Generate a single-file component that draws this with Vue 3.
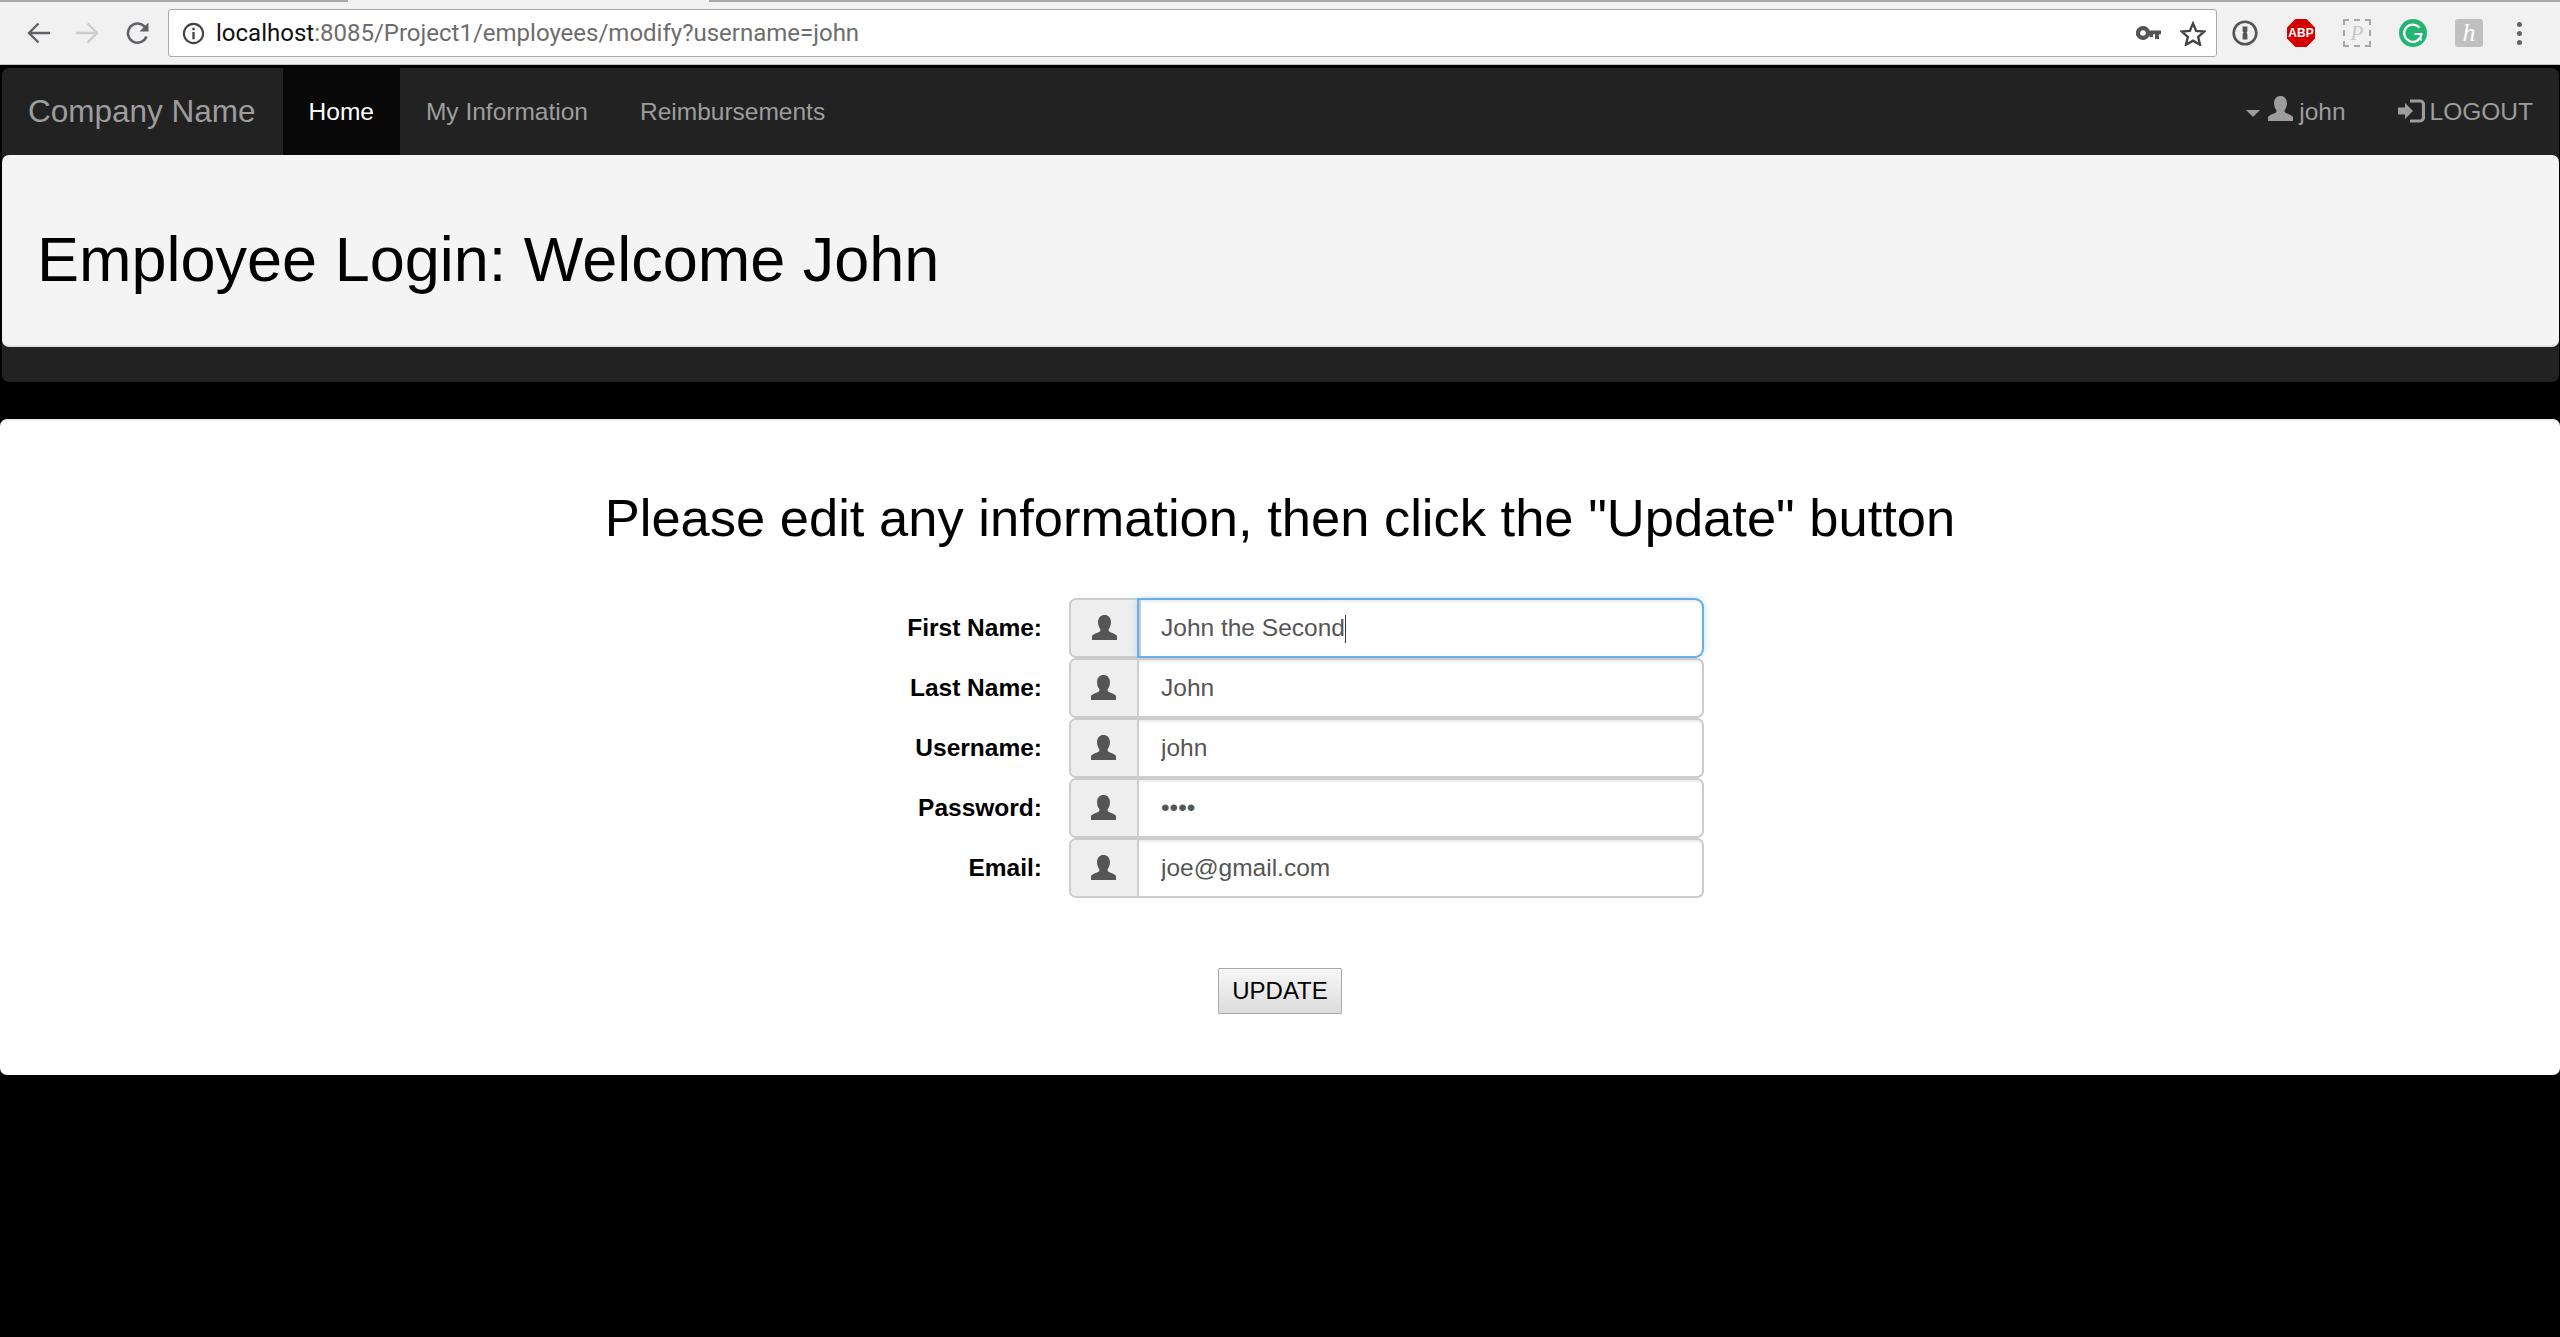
<template>
  <div class="page">
    <div class="tabstrip">
      <span class="tab-line first"></span>
      <span class="tab-line last"></span>
    </div>
    <div class="chrome">
      <svg class="tool" viewBox="0 0 23 22" fill="none" stroke="#5f6368" stroke-width="2.4">
        <path d="M23 11H3M11.5 1.5 2 11l9.5 9.5" />
      </svg>
      <svg class="tool forward" viewBox="0 0 23 22" fill="none" stroke="#cdcdcd" stroke-width="2.4">
        <path d="M0 11h20M11.5 1.5 21 11l-9.5 9.5" />
      </svg>
      <svg class="tool reload" viewBox="0 0 24 24" fill="none" stroke="#5f6368" stroke-width="2.6">
        <path d="M20.5 15.5a9.6 9.6 0 1 1-1.6-9.6" />
        <path d="M22.5 1.5v9h-9z" fill="#5f6368" stroke="none" />
      </svg>
      <div class="address">
        <svg class="info" viewBox="0 0 24 24" fill="none" stroke="#444" stroke-width="2.2">
          <circle cx="12" cy="12" r="10" />
          <path d="M12 10.5V18M12 6v2.6" stroke-width="2.4" />
        </svg>
        <span class="url"><span class="host">localhost</span>:8085/Project1/employees/modify?username=john</span>
        <svg class="key" viewBox="0 0 25 14" fill="#555">
          <path d="M7 0a7 7 0 0 1 6.6 4.6H25v3.6h-2V13h-4V8.2h-2V11h-3.5V9.2A7 7 0 1 1 7 0zm0 4.2a2.8 2.8 0 1 0 0 5.6 2.8 2.8 0 0 0 0-5.6z" />
        </svg>
        <svg class="star" viewBox="0 0 26 25" fill="none" stroke="#444" stroke-width="2.4">
          <path d="m13 2.5 3.2 7.4 8 .7-6 5.3 1.8 7.8L13 19.6l-7 4.1 1.8-7.8-6-5.3 8-.7z" />
        </svg>
      </div>
      <div class="ext">
        <svg class="ext-icon" viewBox="0 0 26 26" fill="none">
          <circle cx="13" cy="13" r="11.3" stroke="#555" stroke-width="2.6" />
          <path d="M10.6 6.5h4.8v5l-1 1.2 1 1.2v5.6h-4.8v-5.600l1-1.200-1-1.200z" fill="#555" />
        </svg>
      </div>
      <div class="ext"><span class="abp">ABP</span></div>
      <div class="ext"><span class="pocket">P</span></div>
      <div class="ext">
        <svg class="ext-icon grammarly" viewBox="0 0 28 28" fill="none">
          <circle cx="14" cy="14" r="14" fill="#22b573" />
          <path d="M20.5 8.8A8.6 8.6 0 1 0 22.4 15h-7" stroke="#fff" stroke-width="2.2" />
          <path d="m22 17 1 5-4.500-1.500z" fill="#fff" />
        </svg>
      </div>
      <div class="ext"><span class="honey">h</span></div>
      <div class="ext menu-dots"><i></i><i></i><i></i></div>
    </div>

    <div class="navbar">
      <div class="nav-row">
        <a class="brand">Company Name</a>
        <a v-for="link in links" :key="link" class="nav-link" :class="{ active: link === 'Home' }">{{ link }}</a>
        <div class="nav-right">
          <a class="nav-link user-link">
            <span class="caret"></span>
            <svg class="nav-user" viewBox="0 0 24 24"><path :d="userPath" /></svg>
            john
          </a>
          <a class="nav-link logout-link">
            <svg class="nav-logout" viewBox="0 0 27 24" fill="none">
              <path d="M0 8.5h7V4l8 8-8 8v-4.500H0z" fill="#9d9d9d" />
              <path d="M12 2h10a3.500 3.500 0 0 1 3.500 3.500v13A3.500 3.500 0 0 1 22 22H12" stroke="#9d9d9d" stroke-width="3.200" />
            </svg>
            LOGOUT
          </a>
        </div>
      </div>
      <div class="jumbotron">
        <h1>Employee Login: Welcome John</h1>
      </div>
    </div>

    <div class="panel">
      <h2>Please edit any information, then click the "Update" button</h2>
      <form class="edit-form" @submit.prevent>
        <div v-for="field in fields" :key="field.label" class="form-row">
          <label>{{ field.label }}:</label>
          <div class="input-group" :class="{ focused: field.focused }">
            <span class="addon">
              <svg class="addon-user" viewBox="0 0 24 24"><path :d="userPath" /></svg>
            </span>
            <input class="field" :type="field.type" v-model="field.value">
            <span v-if="field.focused" class="text-caret"></span>
          </div>
        </div>
        <div class="actions">
          <button class="update" type="submit">UPDATE</button>
        </div>
      </form>
    </div>
  </div>
</template>

<script setup>
import { ref } from 'vue'

const links = ['Home', 'My Information', 'Reimbursements']

const userPath = 'M12 0c3.6 0 6.200 2.600 6.200 6.800 0 3-1 5.400-2.400 7 0 1.400.8 2.200 2 2.800 2.200 1 5 2 6.200 3.400V24H0v-4c1.200-1.400 4-2.400 6.200-3.400 1.200-.6 2-1.400 2-2.800-1.400-1.600-2.400-4-2.400-7C5.800 2.600 8.400 0 12 0z'

const fields = ref([
  { label: 'First Name', type: 'text', value: 'John the Second', focused: true },
  { label: 'Last Name', type: 'text', value: 'John' },
  { label: 'Username', type: 'text', value: 'john' },
  { label: 'Password', type: 'password', value: 'john' },
  { label: 'Email', type: 'text', value: 'joe@gmail.com' }
])
</script>

<style>
html,
body {
  margin: 0;
  background: #000;
}
</style>

<style scoped>
.page {
  min-height: 1337px;
  background: #000;
  font-family: "Liberation Sans", Arial, sans-serif;
  color: #000;
}

.tabstrip {
  display: flex;
  justify-content: space-between;
  background: #f1f1f1;
  height: 2px;
}

.tab-line {
  background: #a8a8a8;
  height: 2px;
}

.tab-line.first {
  width: 348px;
}

.tab-line.last {
  width: 1851px;
}

.chrome {
  display: flex;
  align-items: center;
  height: 63px;
  padding: 0 0 0 27px;
  box-sizing: border-box;
  background: #f1f1f1;
  border-bottom: 1px solid #c4c4c4;
}

.tool {
  width: 23px;
  height: 22px;
  flex: none;
}

.forward {
  margin-left: 26px;
}

.reload {
  width: 24px;
  height: 24px;
  margin-left: 27px;
  margin-right: 18px;
}

.address {
  display: flex;
  align-items: center;
  width: 2049px;
  height: 48px;
  box-sizing: border-box;
  flex: none;
  padding: 0 10px 0 13px;
  background: #fff;
  border: 1px solid #aaa;
  border-radius: 3px;
}

.info {
  width: 23px;
  height: 23px;
  flex: none;
}

.url {
  margin-left: 11px;
  font-family: Roboto, sans-serif;
  font-size: 24px;
  color: #6d6d6d;
  flex: 1;
}

.host {
  color: #111;
}

.key {
  width: 25px;
  height: 14px;
  margin-right: 19px;
}

.star {
  width: 26px;
  height: 25px;
}

.ext {
  width: 56px;
  display: flex;
  align-items: center;
  justify-content: center;
  flex: none;
}

.ext-icon {
  width: 26px;
  height: 26px;
}

.grammarly {
  width: 28px;
  height: 28px;
}

.abp {
  width: 28px;
  height: 28px;
  line-height: 28px;
  text-align: center;
  background: #d40000;
  color: #fff;
  font-size: 12px;
  font-weight: bold;
  clip-path: polygon(30% 0, 70% 0, 100% 30%, 100% 70%, 70% 100%, 30% 100%, 0 70%, 0 30%);
}

.pocket {
  width: 28px;
  height: 28px;
  line-height: 25px;
  text-align: center;
  box-sizing: border-box;
  border: 2px dashed #a6a6a6;
  color: #c8c8c8;
  font-family: "Liberation Serif", serif;
  font-style: italic;
  font-size: 21px;
}

.honey {
  width: 28px;
  height: 28px;
  line-height: 27px;
  text-align: center;
  border-radius: 3px;
  background: #c0c0c0;
  color: #fff;
  font-family: "Liberation Serif", serif;
  font-style: italic;
  font-size: 26px;
}

.menu-dots {
  flex-direction: column;
  gap: 4px;
  margin-left: -6px;
}

.menu-dots i {
  width: 5px;
  height: 5px;
  border-radius: 50%;
  background: #5f6368;
}

.navbar {
  margin: 3px 1px 0 2px;
  padding-bottom: 35px;
  background: #222;
  border-radius: 7px;
}

.nav-row {
  display: flex;
  height: 87px;
  align-items: stretch;
  color: #9d9d9d;
}

.brand {
  display: flex;
  align-items: center;
  padding: 0 27px 0 26px;
  font-size: 31.5px;
  color: #9d9d9d;
}

.nav-link {
  display: flex;
  align-items: center;
  padding: 0 26px;
  font-size: 24.500px;
  color: #9d9d9d;
}

.nav-link.active {
  background: #080808;
  color: #fff;
}

.nav-right {
  display: flex;
  margin-left: auto;
}

.caret {
  width: 0;
  height: 0;
  border-left: 7px solid transparent;
  border-right: 7px solid transparent;
  border-top: 7px solid #9d9d9d;
  margin-right: 8px;
  margin-top: 3px;
}

.nav-user {
  width: 25px;
  height: 25px;
  fill: #9d9d9d;
  margin-right: 6px;
  margin-top: -6px;
}

.nav-logout {
  width: 27px;
  height: 24px;
  margin-right: 5px;
  margin-top: -2px;
}

.jumbotron {
  display: flex;
  align-items: center;
  height: 192px;
  padding: 20px 35px 0;
  background: #f4f4f4;
  border-radius: 7px;
  border-bottom: 2px solid #e2e2e2;
  box-sizing: border-box;
}

.jumbotron h1 {
  margin: 0;
  font-size: 63px;
  font-weight: normal;
  line-height: 1.1;
}

.panel {
  margin-top: 37px;
  height: 656px;
  box-sizing: border-box;
  padding-top: 68px;
  background: #fff;
  border-top: 2px solid #eee;
  border-radius: 7px;
}

.panel h2 {
  margin: 0 0 51px;
  font-size: 52.500px;
  font-weight: normal;
  line-height: 1.1;
  text-align: center;
}

.edit-form {
  display: flex;
  flex-direction: column;
}

.form-row {
  display: grid;
  grid-template-columns: 1042px 635px;
  column-gap: 27px;
  align-items: center;
  height: 60px;
}

.form-row label {
  text-align: right;
  font-size: 24.500px;
  font-weight: bold;
}

.input-group {
  position: relative;
  display: flex;
  height: 60px;
  box-sizing: border-box;
  background: #fff;
  border: 2px solid #ccc;
  border-radius: 7px;
  box-shadow: inset 0 2px 2px rgba(0, 0, 0, 0.075);
}

.input-group.focused {
  border-color: transparent;
}

.addon {
  display: flex;
  align-items: center;
  justify-content: center;
  width: 68px;
  flex: none;
  padding-right: 2px;
  box-sizing: border-box;
  background: #eee;
  border-right: 2px solid #ccc;
  border-radius: 5px 0 0 5px;
}

.addon-user {
  width: 25px;
  height: 25px;
  fill: #555;
}

.field {
  flex: 1;
  min-width: 0;
  padding: 0 22px;
  border: 0;
  outline: 0;
  background: transparent;
  font-family: inherit;
  font-size: 24.500px;
  color: #555;
}

.focused .addon {
  box-shadow: 0 0 0 2px #ccc;
  border-right: 0;
  width: 68px;
}

.focused .field {
  border-radius: 0 7px 7px 0;
  box-shadow: 0 0 0 2px #66afe9, 0 0 10px rgba(102, 175, 233, 0.6);
}

.text-caret {
  position: absolute;
  left: 274px;
  top: 15px;
  width: 1px;
  height: 28px;
  background: #333;
}

.actions {
  display: flex;
  justify-content: center;
  margin-top: 70px;
}

.update {
  width: 124px;
  height: 46px;
  padding: 0;
  font-family: inherit;
  font-size: 24px;
  color: #000;
  border: 1px solid #a9a9a9;
  border-radius: 1px;
  background: linear-gradient(#f6f6f6, #dcdcdc);
}
</style>
